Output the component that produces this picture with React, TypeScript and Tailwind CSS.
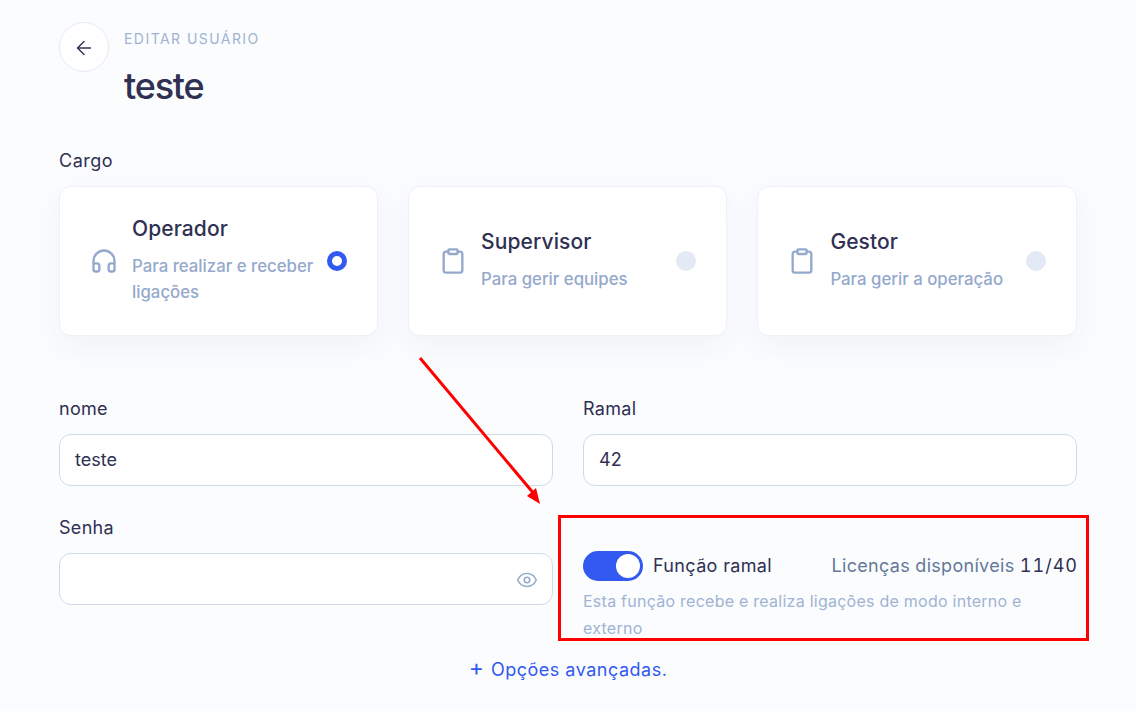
import React from 'react'
import { ArrowLeft, Clipboard, Eye, Headphones } from 'lucide-react'

const CargoCard: React.FC<{
  icon: React.ReactNode
  title: string
  desc: string
  selected?: boolean
}> = ({ icon, title, desc, selected }) => {
  return (
    <div className="h-[150px] rounded-xl border border-[#edf1f8] bg-white pl-[30px] pr-[30px] shadow-[0_10px_30px_rgba(40,60,110,0.05)] flex items-center">
      <div className="w-[30px] shrink-0 text-[#94a9cc]">{icon}</div>
      <div className="ml-[12px] flex-1 -mt-[1px]">
        <div className="text-[21px] leading-[26px] font-medium tracking-[0.1px] text-[#2f3052]">{title}</div>
        <div className="mt-[11px] text-[16.8px] leading-[26px] font-medium text-[#94a9cc]">{desc}</div>
      </div>
      {selected ? (
        <div className="ml-2 h-5 w-5 shrink-0 rounded-full border-[5px] border-[#3259f0] bg-white" />
      ) : (
        <div className="ml-2 h-5 w-5 shrink-0 rounded-full bg-[#e3e9f5]" />
      )}
    </div>
  )
}

const Field: React.FC<{ label: string; value?: string; eye?: boolean }> = ({ label, value, eye }) => {
  return (
    <div>
      <label className="block text-lg leading-[28px] tracking-[0.3px] text-[#2f3052]">{label}</label>
      <div className="mt-[11px] flex h-[52px] items-center justify-between rounded-xl border border-[#cfdbea] bg-white px-[15px] text-lg text-[#2f3052]">
        <span>{value}</span>
        {eye && <Eye size={22} strokeWidth={1.7} className="-mr-[1px] mt-[1px] text-[#94a9cc]" />}
      </div>
    </div>
  )
}

const App: React.FC = () => {
  return (
    <div className="relative h-[711px] overflow-hidden bg-[#fbfcfe] px-[59px] pt-[22px] font-['Inter',sans-serif]">
      <header className="flex">
        <button className="flex h-[50px] w-[50px] items-center justify-center rounded-full border border-[#e4eaf6] bg-white pt-[2px] text-[#2f3052]">
          <ArrowLeft size={22} strokeWidth={1.5} />
        </button>
        <div className="ml-[15px]">
          <div className="mt-[1px] text-sm leading-[32px] tracking-[1.45px] text-[#a0b3d3]">EDITAR USUÁRIO</div>
          <h1 className="mt-[10px] text-[36px] leading-[42px] font-medium tracking-[-1.2px] text-[#2f3052]">teste</h1>
        </div>
      </header>

      <div className="mt-[40px] text-lg leading-[28px] tracking-[0.5px] text-[#2f3052]">Cargo</div>

      <div className="mt-[11px] grid grid-cols-[319px_319.4px_1fr] gap-[30px]">
        <CargoCard icon={<Headphones size={28} strokeWidth={2} />} title="Operador" desc="Para realizar e receber ligações" selected />
        <CargoCard icon={<Clipboard size={28} strokeWidth={2} />} title="Supervisor" desc="Para gerir equipes" />
        <CargoCard icon={<Clipboard size={28} strokeWidth={2} />} title="Gestor" desc="Para gerir a operação" />
      </div>

      <div className="mt-[59px] grid grid-cols-2 gap-x-[30px] gap-y-[28px]">
        <Field label="nome" value="teste" />
        <Field label="Ramal" value="42" />
        <Field label="Senha" eye />
        <div className="pt-[37px]">
          <div className="flex items-center justify-between">
            <div className="flex items-center">
              <div className="flex h-[30px] w-[60px] items-center justify-end rounded-full bg-[#3259f0] pr-[3px]">
                <div className="h-6 w-6 rounded-full bg-white" />
              </div>
              <span className="ml-[10px] text-lg tracking-[0.35px] text-[#2f3052]">Função ramal</span>
            </div>
            <div className="-mr-[1px] text-lg tracking-[0.3px] text-[#64789a]">
              Licenças disponíveis <span className="tabular-nums tracking-[1px] text-[#2f3052]">11/40</span>
            </div>
          </div>
          <p className="mt-[7px] text-base leading-[27px] tracking-[0.25px] text-[#a0b3d3]">
            Esta função recebe e realiza ligações de modo interno e externo
          </p>
        </div>
      </div>

      <div className="mt-[12px] text-center text-lg leading-[28px] tracking-[0.5px] text-[#3259f0]">
        <span className="mr-[1px] text-[23px] leading-[28px]">+</span> Opções avançadas.
      </div>

      {/* marcação vermelha por cima da tela */}
      <div className="pointer-events-none absolute left-[558px] top-[515px] h-[126px] w-[531px] border-[3px] border-[#ff0000]" />
      <svg className="pointer-events-none absolute left-[410px] top-[350px]" width="140" height="160" viewBox="0 0 140 160">
        <line x1="10" y1="8" x2="125" y2="145" stroke="#ff0000" strokeWidth="3" />
        <polygon points="130,154 117,146 126,138" fill="#ff0000" />
      </svg>
    </div>
  )
}

export default App
